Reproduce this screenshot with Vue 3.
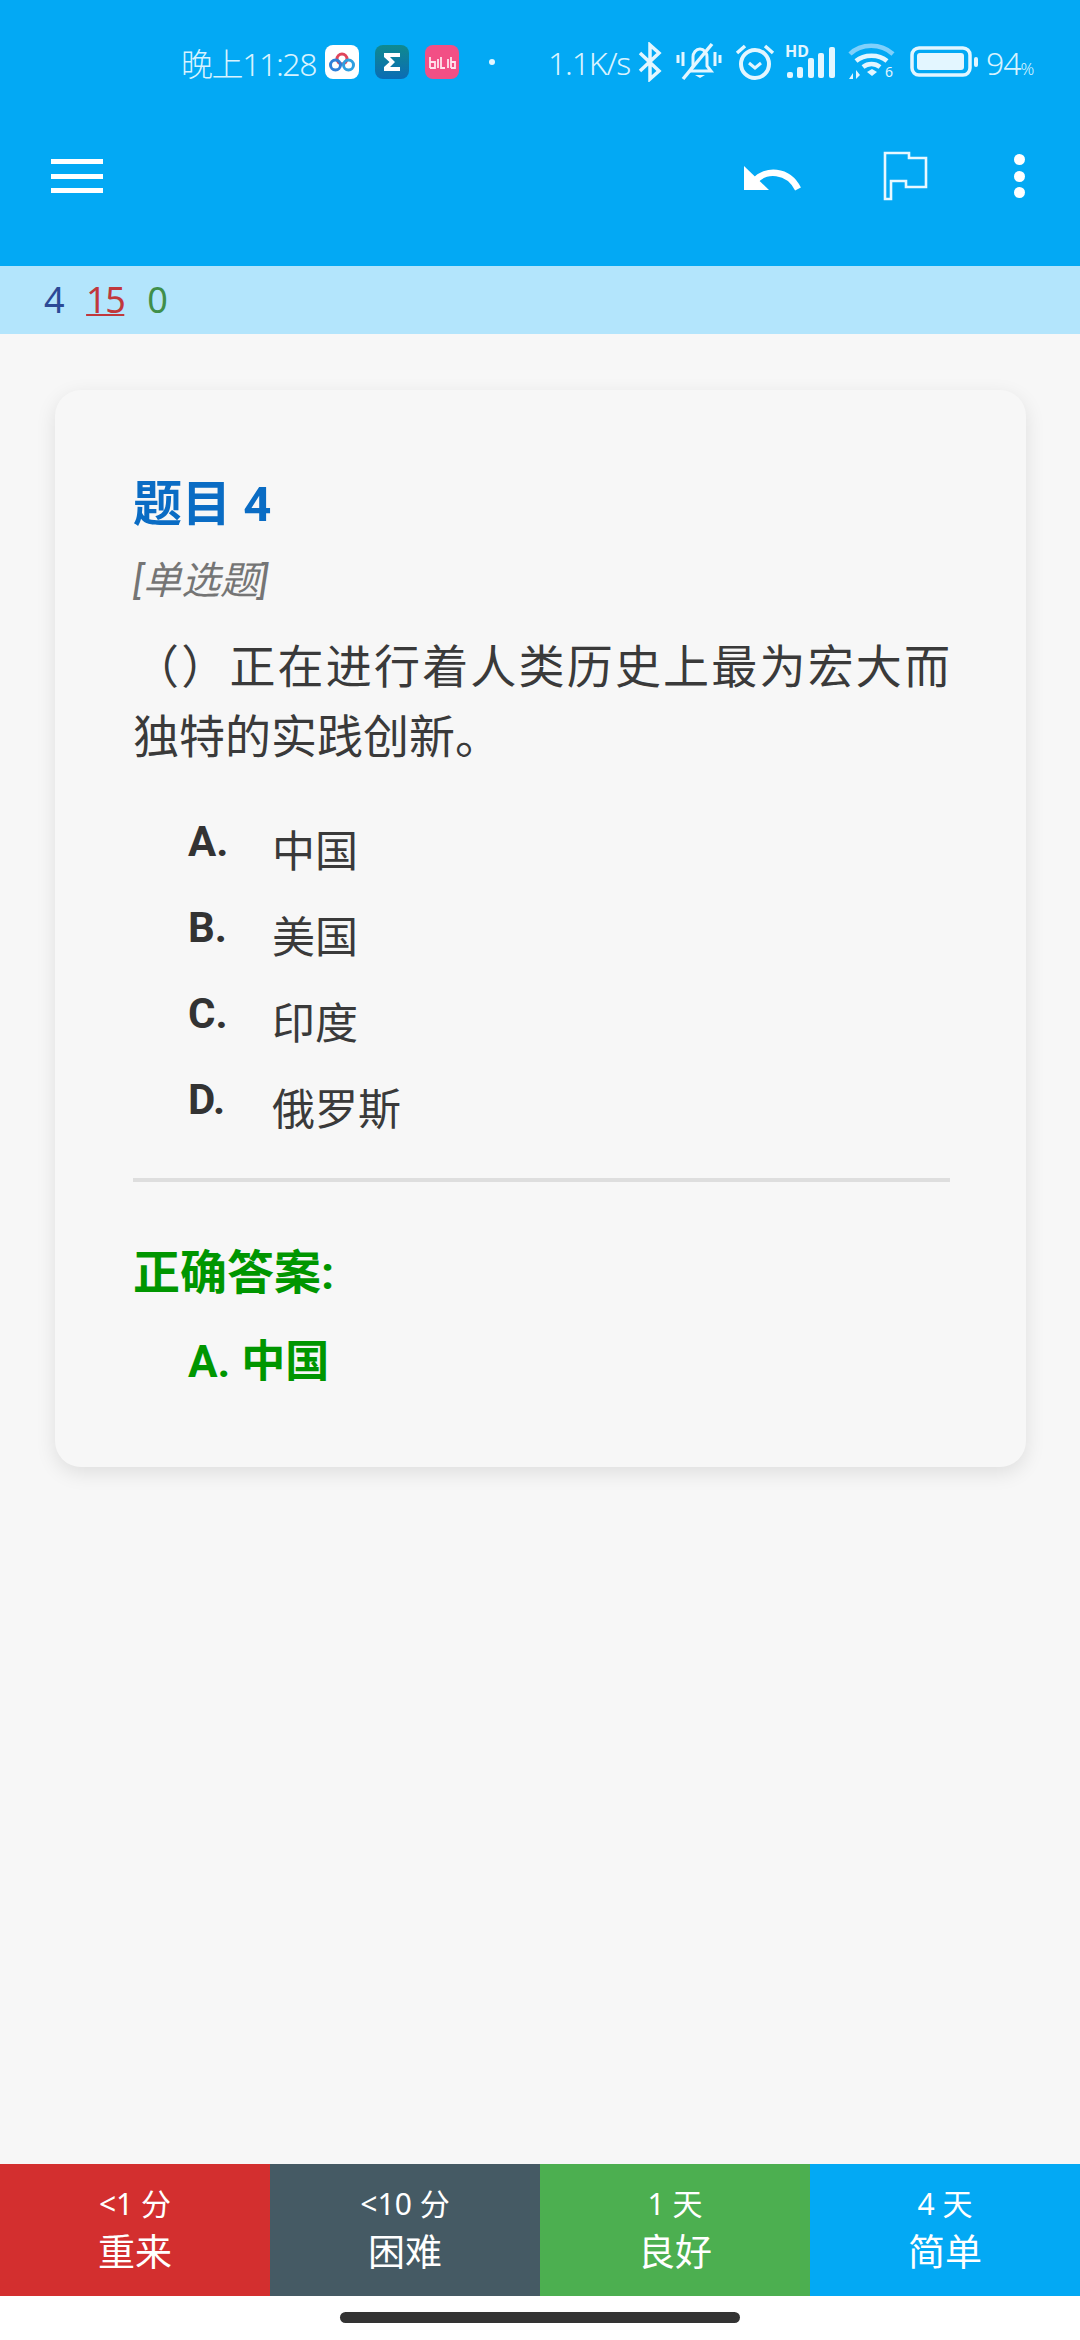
<script setup>
const options = [
  { key: 'A.', text: '中国' },
  { key: 'B.', text: '美国' },
  { key: 'C.', text: '印度' },
  { key: 'D.', text: '俄罗斯' }
]
const buttons = [
  { time: '<1 分', label: '重来', color: '#d32f2f' },
  { time: '<10 分', label: '困难', color: '#455a64' },
  { time: '1 天', label: '良好', color: '#4caf50' },
  { time: '4 天', label: '简单', color: '#03a9f4' }
]
</script>

<template>
  <div class="screen">
    <header class="appbar">
      <div class="status">
        <span class="clock">晚上11:28</span>
        <svg class="notif" viewBox="0 0 34 34">
          <rect width="34" height="34" rx="8" fill="#fff" />
          <circle cx="17" cy="14" r="5" fill="none" stroke="#e0445a" stroke-width="3" />
          <circle cx="10.5" cy="20" r="5" fill="none" stroke="#2f7fd8" stroke-width="3" />
          <circle cx="23.5" cy="20" r="5" fill="none" stroke="#2f9fe0" stroke-width="3" />
        </svg>
        <svg class="notif" viewBox="0 0 34 34">
          <defs>
            <linearGradient id="sig" x1="0" y1="0" x2="0" y2="1">
              <stop offset="0" stop-color="#0f8a8f" />
              <stop offset="1" stop-color="#0b6cb5" />
            </linearGradient>
          </defs>
          <rect width="34" height="34" rx="8" fill="url(#sig)" />
          <path d="M9 8h16v4H15l5 5-5 5h10v4H9v-4l5.500-5L9 12z" fill="#fff" />
        </svg>
        <svg class="notif" viewBox="0 0 34 34">
          <rect width="34" height="34" rx="8" fill="#f24f85" />
          <path d="M5 12v11M5 23h5v-6H5M13 14v9M16 12v11h4M23 14v9M26 12v11M26 23h4v-6h-4" stroke="#ffe3ec" stroke-width="1.800" fill="none" />
        </svg>
        <span class="dot"></span>
        <span class="speed">1.1K/s</span>
        <svg class="st bt" viewBox="0 0 26 40">
          <path d="M3 11l19 18-9 8V3l9 8L3 29" fill="none" stroke="#e3f6ff" stroke-width="3.500" />
        </svg>
        <svg class="st bell" viewBox="0 0 46 40">
          <path d="M14 29l3-5v-9c0-4 3-8 7-8s7 4 7 8v9l4 5z" fill="none" stroke="#e3f6ff" stroke-width="3" />
          <path d="M19 33h10l-5 3z" fill="#e3f6ff" />
          <path d="M36 2L7 37" stroke="#e3f6ff" stroke-width="3.500" />
          <path d="M2 13v8M7 10v14M39 10v14M44 13v8" stroke="#e3f6ff" stroke-width="3" />
        </svg>
        <svg class="st alarm" viewBox="0 0 40 40">
          <circle cx="20" cy="22" r="14" fill="none" stroke="#e3f6ff" stroke-width="4" />
          <path d="M14 21l6 5 6-5" fill="none" stroke="#e3f6ff" stroke-width="3" />
          <path d="M2 11l8-7M38 11l-8-7" stroke="#e3f6ff" stroke-width="3.500" />
        </svg>
        <svg class="st signal" viewBox="0 -10 52 50">
          <text x="1" y="11" class="hd">HD</text>
          <rect x="3" y="26" width="6" height="6" rx="2" fill="#e3f6ff" />
          <rect x="13" y="21" width="6" height="11" rx="2" fill="#e3f6ff" />
          <rect x="24" y="12" width="6" height="20" rx="2" fill="#e3f6ff" />
          <rect x="34" y="7" width="6" height="25" rx="2" fill="#e3f6ff" />
          <rect x="45" y="1" width="6" height="31" rx="2" fill="#e3f6ff" />
        </svg>
        <svg class="st wifi" viewBox="0 0 48 40">
          <path d="M2 12C13 1 33 1 45 12" fill="none" stroke="#7fd0fb" stroke-width="4.500" />
          <path d="M8 19c8-7 23-7 31 0" fill="none" stroke="#e3f6ff" stroke-width="4.500" />
          <path d="M15 25c5-4 12-4 17 0" fill="none" stroke="#e3f6ff" stroke-width="4.500" />
          <path d="M19 30l5-3 5 3-5 4z" fill="#e3f6ff" />
          <path d="M1 37l4-6v6zM8 37v-9l4 5z" fill="#e3f6ff" />
          <text x="37" y="35" class="six">6</text>
        </svg>
        <svg class="st batt" viewBox="0 0 68 32">
          <rect x="2" y="2" width="58" height="27" rx="7" fill="none" stroke="#e3f6ff" stroke-width="3.500" />
          <rect x="7" y="7" width="47" height="17" rx="3" fill="#e3f6ff" />
          <rect x="64" y="11" width="4" height="10" rx="2" fill="#e3f6ff" />
        </svg>
        <span class="pct">94<small>%</small></span>
      </div>
      <div class="toolbar">
        <div class="menu"><i></i><i></i><i></i></div>
        <div class="actions">
          <svg class="undo" viewBox="0 0 58 26">
            <path d="M0 0v24h25z" fill="#fff" />
            <path d="M11 15C21 3 44 3 54 23" fill="none" stroke="#fff" stroke-width="6.500" />
          </svg>
          <svg class="flag" viewBox="0 0 45 50">
            <path d="M2 48V2h24v5h17v29H23v-6H8v18z" fill="none" stroke="#e8f8ff" stroke-width="2.600" />
          </svg>
          <div class="more"><i></i><i></i><i></i></div>
        </div>
      </div>
    </header>

    <div class="counts">
      <span class="new">4</span>
      <span class="lrn">15</span>
      <span class="rev">0</span>
    </div>

    <main class="content">
      <section class="card">
        <h1 class="title">题目 4</h1>
        <div class="type">[单选题]</div>
        <p class="question">（）正在进行着人类历史上最为宏大而独特的实践创新。</p>
        <ul class="options">
          <li v-for="o in options" :key="o.key">
            <b>{{ o.key }}</b>
            <span>{{ o.text }}</span>
          </li>
        </ul>
        <hr class="divider" />
        <div class="answer-head">正确答案:</div>
        <div class="answer">A. 中国</div>
      </section>
    </main>

    <footer class="grades">
      <button v-for="b in buttons" :key="b.label" :style="{ background: b.color }">
        <span class="time">{{ b.time }}</span>
        <span class="label">{{ b.label }}</span>
      </button>
    </footer>
    <div class="navbar"><span></span></div>
  </div>
</template>

<style>
html,
body {
  margin: 0;
  background: #f7f7f7;
}
</style>

<style scoped>
.screen {
  width: 1080px;
  height: 2340px;
  display: flex;
  flex-direction: column;
  background: #f7f7f7;
  font-family: Roboto, "Noto Sans CJK SC", sans-serif;
  overflow: hidden;
}
.appbar {
  height: 266px;
  background: #03a9f4;
  box-sizing: border-box;
  flex: none;
}
.status {
  height: 104px;
  padding: 20px 0 0 181px;
  box-sizing: border-box;
  display: flex;
  align-items: center;
  color: #d8f3ff;
  font-family: "Noto Sans", "Noto Sans CJK SC", sans-serif;
  font-size: 32px;
  font-weight: 300;
}
.clock {
  letter-spacing: -1.400px;
  width: 144px;
  white-space: nowrap;
}
.notif {
  width: 34px;
  height: 34px;
  margin-left: 16px;
  flex: none;
}
.notif:first-of-type {
  margin-left: 0;
}
.dot {
  width: 6px;
  height: 6px;
  border-radius: 50%;
  background: #e3f6ff;
  margin-left: 30px;
}
.speed {
  margin-left: 53px;
  width: 80px;
  letter-spacing: -1.200px;
  white-space: nowrap;
}
.st {
  flex: none;
}
.bt {
  width: 26px;
  height: 40px;
  margin-left: 9px;
}
.bell {
  width: 46px;
  height: 40px;
  margin-left: 13px;
}
.alarm {
  width: 40px;
  height: 40px;
  margin-left: 13px;
}
.signal {
  width: 52px;
  height: 50px;
  margin: -2px 0 0 9px;
}
.wifi {
  width: 48px;
  height: 40px;
  margin-left: 12px;
}
.batt {
  width: 68px;
  height: 32px;
  margin-left: 14px;
}
.pct {
  margin-left: 8px;
  letter-spacing: -1px;
}
.pct small {
  font-size: 17px;
}
.hd {
  font: 700 16px "Noto Sans", sans-serif;
  fill: #e3f6ff;
}
.six {
  font: 400 14px "Noto Sans", sans-serif;
  fill: #e3f6ff;
}
.toolbar {
  height: 162px;
  display: flex;
  align-items: center;
  justify-content: space-between;
  padding: 0 55px 18px 51px;
  box-sizing: border-box;
}
.menu {
  display: flex;
  flex-direction: column;
  gap: 9.500px;
  width: 52px;
}
.menu i {
  height: 5px;
  background: #fff;
}
.actions {
  display: flex;
  align-items: center;
}
.undo {
  width: 58px;
  height: 26px;
  margin-top: 6px;
}
.flag {
  width: 45px;
  height: 50px;
  margin-left: 81px;
}
.more {
  margin-left: 86px;
  display: flex;
  flex-direction: column;
  gap: 5.500px;
}
.more i {
  width: 11px;
  height: 11px;
  border-radius: 50%;
  background: #fff;
}
.counts {
  height: 68px;
  flex: none;
  background: #b3e5fc;
  display: flex;
  align-items: center;
  padding: 0 0 2px 44px;
  box-sizing: border-box;
  gap: 23px;
  font-family: "Noto Sans", sans-serif;
  font-size: 36px;
  letter-spacing: -1.500px;
}
.new {
  color: #2c4a96;
}
.lrn {
  color: #c0383c;
  text-decoration: underline;
  text-decoration-thickness: 2px;
}
.rev {
  color: #3f8f4a;
}
.content {
  flex: 1;
  padding: 56px 54px 0 55px;
}
.card {
  background: #f7f7f7;
  border-radius: 26px;
  box-shadow: 0 6px 20px rgba(0, 0, 0, 0.1);
  padding: 80px 76px 73px 78px;
  color: #333;
}
.title {
  margin: 0;
  font-size: 49px;
  line-height: 70px;
  font-weight: 700;
  color: #0a6cc4;
}
.type {
  margin-top: 16px;
  font-size: 38.500px;
  line-height: 50px;
  font-style: italic;
  color: #757575;
}
.question {
  margin: 26px 0 0;
  font-size: 46px;
  line-height: 70px;
  font-weight: 400;
  color: #3a3a3a;
  text-align: justify;
}
.options {
  list-style: none;
  margin: 33px 0 0;
  padding: 0 0 0 55px;
}
.options li {
  height: 86px;
  display: flex;
  align-items: center;
}
.options b {
  width: 84px;
  font-size: 42px;
  position: relative;
  top: -7px;
}
.options span {
  font-size: 43px;
  font-weight: 400;
  color: #3a3a3a;
}
.divider {
  margin: 29px 0 0;
  border: none;
  height: 4px;
  background: #dedede;
}
.answer-head {
  margin-top: 59px;
  font-size: 47px;
  line-height: 64px;
  font-weight: 700;
  color: #009600;
}
.answer {
  margin: 25px 0 0 55px;
  font-size: 44px;
  line-height: 64px;
  font-weight: 700;
  color: #009600;
}
.grades {
  height: 132px;
  flex: none;
  display: grid;
  grid-template-columns: repeat(4, 1fr);
}
.grades button {
  border: none;
  padding: 0;
  margin: 0;
  color: #fff;
  display: flex;
  flex-direction: column;
  align-items: center;
  justify-content: center;
  font-family: "Noto Sans", "Noto Sans CJK SC", sans-serif;
  font-weight: 400;
}
.time {
  font-size: 30px;
  line-height: 44px;
}
.label {
  font-size: 37px;
  line-height: 52px;
}
.navbar {
  height: 44px;
  flex: none;
  background: #fff;
  display: flex;
  justify-content: center;
  padding-top: 16px;
  box-sizing: border-box;
}
.navbar span {
  width: 400px;
  height: 11px;
  border-radius: 6px;
  background: #333;
}
</style>
